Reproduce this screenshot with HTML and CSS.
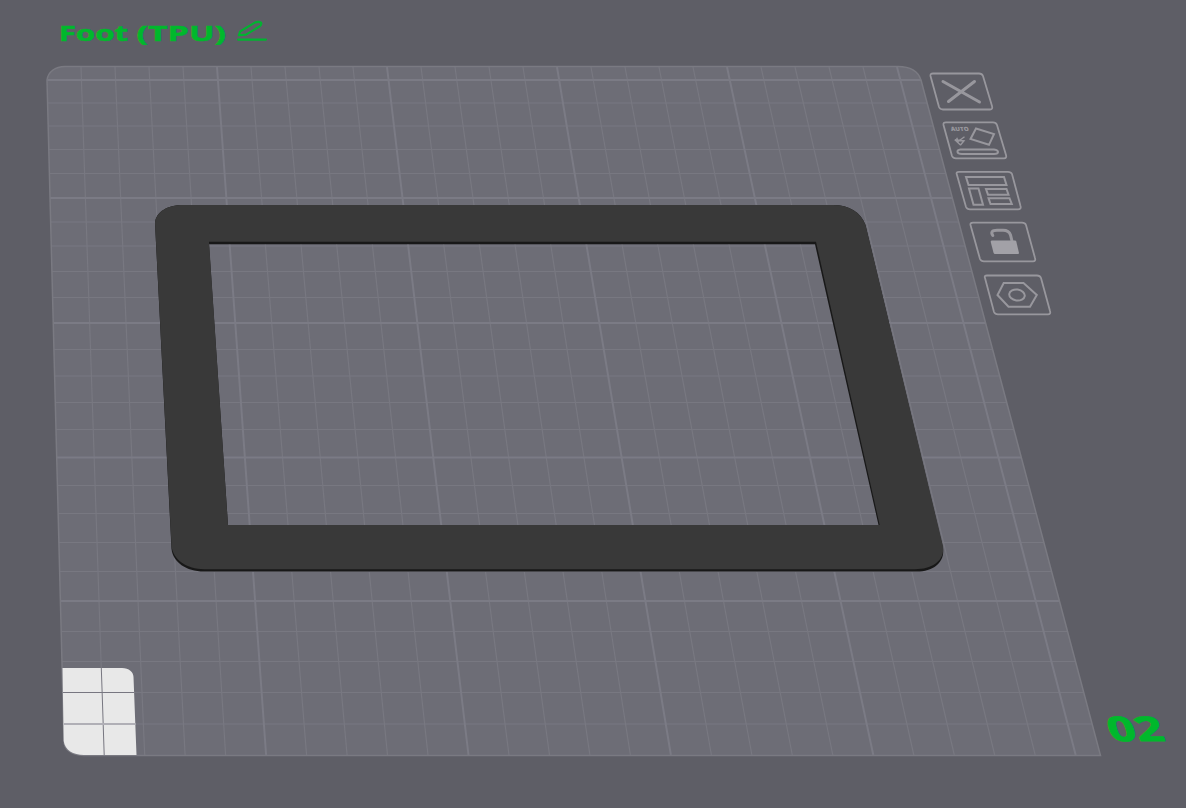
FILE: index.html
```
<!DOCTYPE html>
<html lang="en">
<head>
  <meta charset="UTF-8">
  <meta name="viewport" content="width=device-width, initial-scale=1.0">
  <title>Foot (TPU)</title>
  <link rel="stylesheet" href="styles.css">
</head>
<body>
  <svg class="scene" viewBox="0 0 1186 808" xmlns="http://www.w3.org/2000/svg">
    <defs>
      <clipPath id="bedClip">
        <path d="M47 80C48 72 55 66.5 65 66.5H898C910 66.5 918 71 921 80L1100.5 755.5H84C72 755 64 750 64 741Z"/>
      </clipPath>
    </defs>

    <!-- Build plate -->
    <path class="bed" d="M47 80C48 72 55 66.5 65 66.5H898C910 66.5 918 71 921 80L1100.5 755.5H84C72 755 64 750 64 741Z"/>
    <g clip-path="url(#bedClip)">
      <path class="grid" d="M0 103H1186M0 126H1186M0 149.5H1186M0 173.5H1186M0 222H1186M0 246H1186M0 271.5H1186M0 297.5H1186M0 349.5H1186M0 376H1186M0 402.5H1186M0 429.5H1186M0 485.5H1186M0 513.5H1186M0 542.5H1186M0 571.5H1186M0 631.5H1186M0 661.5H1186M0 692.5H1186M0 724H1186"/>
      <path class="grid" d="M81 67L104.2 755M115 67L144.7 755M149 67L185.1 755M183 67L225.6 755M251 67L306.6 755M285 67L347.1 755M319 67L387.5 755M353 67L428 755M421 67L509 755M455 67L549.5 755M489 67L589.9 755M523 67L630.4 755M591 67L711.4 755M625 67L751.9 755M659 67L792.3 755M693 67L832.8 755M761 67L913.8 755M795 67L954.3 755M829 67L994.7 755M863 67L1035.2 755"/>
      <path class="grid major" d="M0 80H1186M0 198H1186M0 323H1186M0 457.5H1186M0 601H1186M217 67L266.1 755M387 67L468.5 755M557 67L670.9 755M727 67L873.3 755M897 67L1075.7 755"/>
    </g>
    <path class="edge" d="M47 80C48 72 55 66.5 65 66.5H898C910 66.5 918 71 921 80L1100.5 755.5H84C72 755 64 750 64 741Z"/>

    <!-- Excluded corner -->
    <path class="exclude" d="M62.5 668H122C129 668 133.5 672 133.5 677L136.5 755H84C73 755 65 750 63.7 741Z"/>
    <path class="exclude-line" d="M63 692.5H134M101.3 668L102.4 700L104.2 755"/>
    <path class="exclude-line soft" d="M64 724H135.5"/>

    <!-- Model -->
    <path class="model-side" fill-rule="evenodd" d="M155 223C156 212 167 205 183 205H833C849 205 861 212 865.5 225L943 548C945 562 934 571.5 917 571.5H204C186 571.5 173 562 171.5 549ZM209 244.3H815L878.5 525H228Z"/>
    <path class="model" fill-rule="evenodd" d="M155 223C156 212 167 205 183 205H833C849 205 861 212 865.5 225L943 546C945 560 933 569.2 915 569.2H204C187 569 173 560 171.5 546ZM209 241.8H816L879.7 525H228Z"/>

    <!-- Plate name -->
    <g class="name">
      <text x="58.7" y="41.3" textLength="69.5" lengthAdjust="spacingAndGlyphs">Foot</text>
      <text x="136.5" y="41.3" textLength="89.5" lengthAdjust="spacingAndGlyphs">(TPU)</text>
    </g>
    <path class="pencil" d="M238.8 35.3L240.2 31.3L254.5 22.8Q258.5 21 261 22.6Q262 24.5 259.5 26.5L246 34.6ZM238 39.6H266"/>

    <!-- Plate number -->
    <text class="number" transform="translate(1111.5 741.3) skewX(18)" x="0" y="0" textLength="55" lengthAdjust="spacingAndGlyphs">02</text>

    <!-- Plate buttons -->
    <g class="buttons">
      <path d="M933 73.5H979Q982 73.5 983 76L992 106Q993 109.5 990 109.5H943Q940 109.5 939 107L930.5 76Q930 73.5 933 73.5Z"/>
      <path d="M946 122.3H993Q996 122.3 997 125L1006 155Q1007 158.3 1004 158.3H956Q953 158.3 952 156L943.5 125Q943 122.3 946 122.3Z"/>
      <path d="M959 171.8H1008Q1011 171.8 1012 174L1020.5 206Q1021.5 209.3 1018 209.3H970Q967 209.3 966 207L956.7 174Q956 171.8 959 171.8Z"/>
      <path d="M973 222.7H1022Q1025 222.7 1026 225L1035 258Q1036 261.3 1033 261.3H984Q981 261.3 980 259L970.5 225Q970 222.7 973 222.7Z"/>
      <path d="M987 275.5H1037Q1040 275.5 1041 278L1050 311Q1051 314.3 1048 314.3H998Q995 314.3 994 312L985 278Q984 275.5 987 275.5Z"/>
    </g>
    <g class="icons">
      <path class="thick" d="M943 81.5L979.5 102M974.5 81.5L948.5 101.5"/>
      <path d="M976 128.5L994 134L989 144.8L970.5 139Z"/>
      <path d="M960.5 149.5H994Q998 150 998 152Q998 154 994 154H962Q958 154 957.5 152Q957 150 960.5 149.5Z"/>
      <path class="thin" d="M956.8 137.8L958 142L954.8 139.8L960.5 145M954.8 139.8L964 140.8L960.5 145M958 141.5L964.5 136.8"/>
      <path d="M966 177H1004L1006.5 185H968.5ZM969 188.5H978.5L983 204.8H973.5ZM986 189H1006.5L1008.5 194.7H988ZM988.5 198.2H1009.5L1011.8 204H990.5Z"/>
      <path class="thick" d="M992.8 235.5Q989.5 230.3 997 230.3H1003Q1009 230.3 1010.5 235L1012 241"/>
      <path class="solid" d="M991.5 240.5H1015Q1016 240.5 1016.3 241.5L1019 253Q1019 254 1018 254H995Q994 254 993.6 253L990.6 241.5Z"/>
      <path d="M1003.7 283H1023.5L1036.8 295L1030 306.8H1008.5L997.5 295Z"/>
      <ellipse cx="1017" cy="295" rx="7.8" ry="5.5" transform="rotate(8 1017 295)"/>
    </g>
    <text class="auto" transform="translate(951.3 130.8) skewX(14)" x="0" y="0" textLength="18" lengthAdjust="spacingAndGlyphs">AUTO</text>
  </svg>
</body>
</html>
```
FILE: styles.css
```
body {
  margin: 0;
  background-color: #5e5e66;
  overflow: hidden;
}
.scene {
  display: block;
  width: 1186px;
  height: 808px;
}
.bed {
  fill: #6d6d76;
}
.grid {
  fill: none;
  stroke: #787881;
  stroke-width: 1.2;
}
.grid.major {
  stroke: #7b7b85;
  stroke-width: 2;
}
.edge {
  fill: none;
  stroke: #7a7a82;
  stroke-width: 1.5;
}
.exclude {
  fill: #e8e8e8;
}
.exclude-line {
  fill: none;
  stroke: #777680;
  stroke-width: 1;
}
.exclude-line.soft {
  stroke: #b0afb6;
  stroke-width: 2;
}
.model {
  fill: #393939;
}
.model-side {
  fill: #181818;
}
.name {
  font-family: "Open Sans", "Noto Sans", sans-serif;
  font-size: 21.5px;
  font-weight: 700;
  fill: #00b82c;
  stroke: #00b82c;
  stroke-width: 0.5;
}
.number {
  font-family: "Open Sans", "Noto Sans", sans-serif;
  font-size: 34px;
  font-weight: 700;
  fill: #00b82c;
  stroke: #00b82c;
  stroke-width: 0.9;
  stroke-linejoin: round;
}
.pencil {
  fill: none;
  stroke: #00b430;
  stroke-width: 2.1;
  stroke-linecap: round;
  stroke-linejoin: round;
}
.buttons path {
  fill: none;
  stroke: #98979d;
  stroke-width: 1.8;
}
.icons path, .icons ellipse {
  fill: none;
  stroke: #98979d;
  stroke-width: 2;
}
.icons .thick {
  stroke-width: 3;
  stroke-linecap: round;
}
.icons .thin {
  stroke-width: 1.4;
}
.icons .solid {
  fill: #a2a1a7;
  stroke: none;
}
.auto {
  font-family: "Open Sans", "Noto Sans", sans-serif;
  font-size: 5.8px;
  font-weight: 800;
  fill: #98979d;
}
```
